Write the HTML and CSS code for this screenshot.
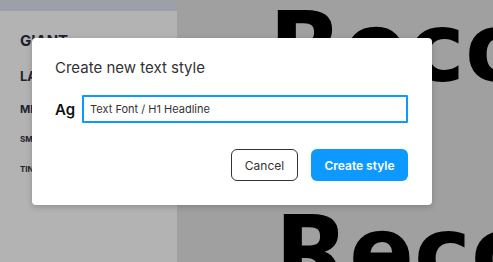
FILE: index.html
```html
<!DOCTYPE html>
<html lang="en">
<head>
  <meta charset="UTF-8">
  <meta name="viewport" content="width=device-width, initial-scale=1.0">
  <title>Create new text style</title>
  <link rel="stylesheet" href="styles.css">
</head>
<body>
  <div class="app">
    <aside class="sidebar">
      <div class="sidebar-top"></div>
      <ul class="sizes">
        <li class="size giant">GIANT</li>
        <li class="size large">LARGE</li>
        <li class="size medium">MEDIUM</li>
        <li class="size small">SMALL</li>
        <li class="size tiny">TINY</li>
      </ul>
    </aside>
    <main class="canvas">
      <div class="sample first">Recommended</div>
      <div class="sample second">Recommended</div>
    </main>
  </div>

  <div class="modal">
    <h2 class="modal-title">Create new text style</h2>
    <div class="field">
      <span class="preview">Ag</span>
      <input class="name-input" type="text" value="Text Font / H1 Headline">
    </div>
    <div class="actions">
      <button class="btn btn-secondary">Cancel</button>
      <button class="btn btn-primary">Create style</button>
    </div>
  </div>
</body>
</html>
```

FILE: styles.css
```css
* {
  box-sizing: border-box;
}

body {
  margin: 0;
  font-family: Inter, "Liberation Sans", sans-serif;
  overflow: hidden;
  height: 262px;
}

.app {
  display: flex;
  height: 262px;
}

.sidebar {
  width: 177px;
  background-color: #b3b3b3;
}

.sidebar-top {
  height: 11px;
  background-color: #9ca0a9;
}

.sizes {
  list-style: none;
  margin: 0;
  padding: 22px 0 0 20px;
  color: #1e2130;
  font-weight: 700;
}

.size {
  line-height: 1;
}

.giant {
  font-size: 15px;
  height: 37px;
}

.large {
  font-size: 13px;
  height: 34px;
}

.medium {
  font-size: 11px;
  height: 31px;
}

.small,
.tiny {
  font-size: 8px;
  height: 30px;
}

.canvas {
  flex: 1;
  background-color: #a0a0a0;
  overflow: hidden;
  white-space: nowrap;
  color: #000;
  font-family: "DejaVu Sans", sans-serif;
  font-weight: 700;
}

.sample {
  font-size: 96px;
  line-height: 1;
  letter-spacing: 0;
}

.first {
  margin: 0 0 0 92px;
}

.second {
  margin: 108px 0 0 98px;
}

.modal {
  position: absolute;
  left: 32px;
  top: 38px;
  width: 400px;
  height: 167px;
  background-color: #fff;
  border-radius: 4px;
  box-shadow: 0 2px 6px rgba(0, 0, 0, 0.2);
  padding: 21px 24px 0 23px;
}

.modal-title {
  margin: 0;
  font-size: 15px;
  font-weight: 400;
  color: #333;
  line-height: 18px;
}

.field {
  display: flex;
  align-items: center;
  gap: 7px;
  margin-top: 18px;
}

.preview {
  font-size: 15px;
  font-weight: 600;
  color: #111;
}

.name-input {
  flex: 1;
  height: 28px;
  border: 2px solid #0d99ff;
  border-radius: 1px;
  padding: 0 6px;
  font-family: Inter, sans-serif;
  font-size: 11px;
  color: #333;
  outline: none;
}

.actions {
  display: flex;
  justify-content: flex-end;
  gap: 13px;
  margin-top: 26px;
}

.btn {
  height: 32px;
  border-radius: 6px;
  font-family: Inter, sans-serif;
  font-size: 12px;
  padding: 0;
}

.btn-secondary {
  width: 67px;
  background-color: #fff;
  border: 1px solid #333;
  color: #333;
}

.btn-primary {
  width: 97px;
  background-color: #0d99ff;
  border: none;
  color: #fff;
  font-weight: 600;
}
```
